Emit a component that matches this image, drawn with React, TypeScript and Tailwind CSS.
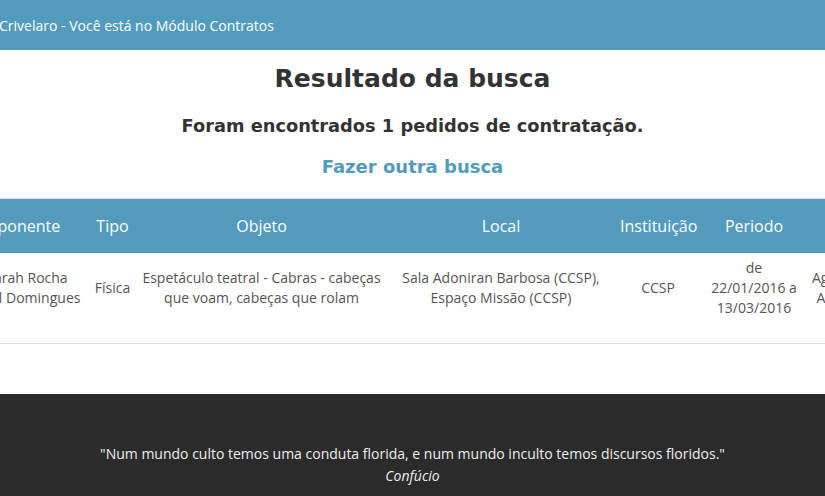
import React from "react";

const body = { fontFamily: '"Open Sans", "Liberation Sans", sans-serif' };
const head = { fontFamily: '"DejaVu Sans", "Liberation Sans", sans-serif' };

export default function App() {
  return (
    <div className="w-[825px] h-[496px] overflow-hidden bg-white flex flex-col" style={body}>
      <header className="h-[50px] shrink-0 bg-[#529bbc] flex items-center text-white text-[14px]">
        <span className="ml-[-1px] whitespace-nowrap">Crivelaro - Você está no Módulo Contratos</span>
      </header>

      <main className="flex flex-col items-center shrink-0">
        <h1 className="mt-[14px] text-[25px] leading-[30px] font-bold text-[#333]" style={head}>
          Resultado da busca
        </h1>
        <h2 className="mt-[20px] text-[17.8px] leading-[24px] font-bold text-[#333]" style={head}>
          Foram encontrados 1 pedidos de contratação.
        </h2>
        <a className="mt-[17px] text-[18px] leading-[24px] font-bold text-[#529bbc]" style={head}>
          Fazer outra busca
        </a>
      </main>

      <div className="mt-[19px] shrink-0">
        <table className="table-fixed border-collapse w-[944px] ml-[-50px] border-t border-[#ddd]">
          <colgroup>
            <col className="w-[138px]" />
            <col className="w-[49px]" />
            <col className="w-[249px]" />
            <col className="w-[230px]" />
            <col className="w-[84px]" />
            <col className="w-[108px]" />
            <col className="w-[86px]" />
          </colgroup>
          <thead>
            <tr className="bg-[#529bbc] text-white text-[16px]">
              <th className="h-[54px] pl-[4px] pr-[10px] font-normal text-center align-middle whitespace-nowrap">
                Proponente
              </th>
              {["Tipo", "Objeto", "Local", "Instituição", "Periodo", "Status"].map((h) => (
                <th key={h} className="h-[54px] px-[4px] font-normal text-center align-middle whitespace-nowrap">
                  {h}
                </th>
              ))}
            </tr>
          </thead>
          <tbody>
            <tr className="border-b border-[#ddd] text-[14px] leading-[20px] text-[#555]">
              <td className="pt-[5px] pb-[25px] pl-[20px] pr-[4px] text-center align-middle whitespace-nowrap">
                Sarah Rocha
                <br />
                Abel Domingues
              </td>
              <td className="pt-[5px] pb-[25px] px-[4px] text-center align-middle whitespace-nowrap">Física</td>
              <td className="pt-[5px] pb-[25px] px-[4px] text-center align-middle whitespace-nowrap">
                Espetáculo teatral - Cabras - cabeças
                <br />
                que voam, cabeças que rolam
              </td>
              <td className="pt-[5px] pb-[25px] px-[4px] text-center align-middle whitespace-nowrap">
                Sala Adoniran Barbosa (CCSP),
                <br />
                Espaço Missão (CCSP)
              </td>
              <td className="pt-[5px] pb-[25px] px-[4px] text-center align-middle whitespace-nowrap">CCSP</td>
              <td className="pt-[5px] pb-[25px] px-[4px] text-center align-middle whitespace-nowrap">
                de
                <br />
                22/01/2016 a
                <br />
                13/03/2016
              </td>
              <td className="pt-[5px] pb-[25px] px-[4px] text-center align-middle whitespace-nowrap">
                Aguardando
                <br />
                Aprovação
              </td>
            </tr>
          </tbody>
        </table>
      </div>

      <footer className="mt-[50px] flex-1 bg-[#2b2b2b] pt-[49px] flex flex-col items-center text-[14px] leading-[22px] text-[#eee]">
        <p className="whitespace-nowrap">"Num mundo culto temos uma conduta florida, e num mundo inculto temos discursos floridos."</p>
        <p className="italic">Confúcio</p>
      </footer>
    </div>
  );
}
